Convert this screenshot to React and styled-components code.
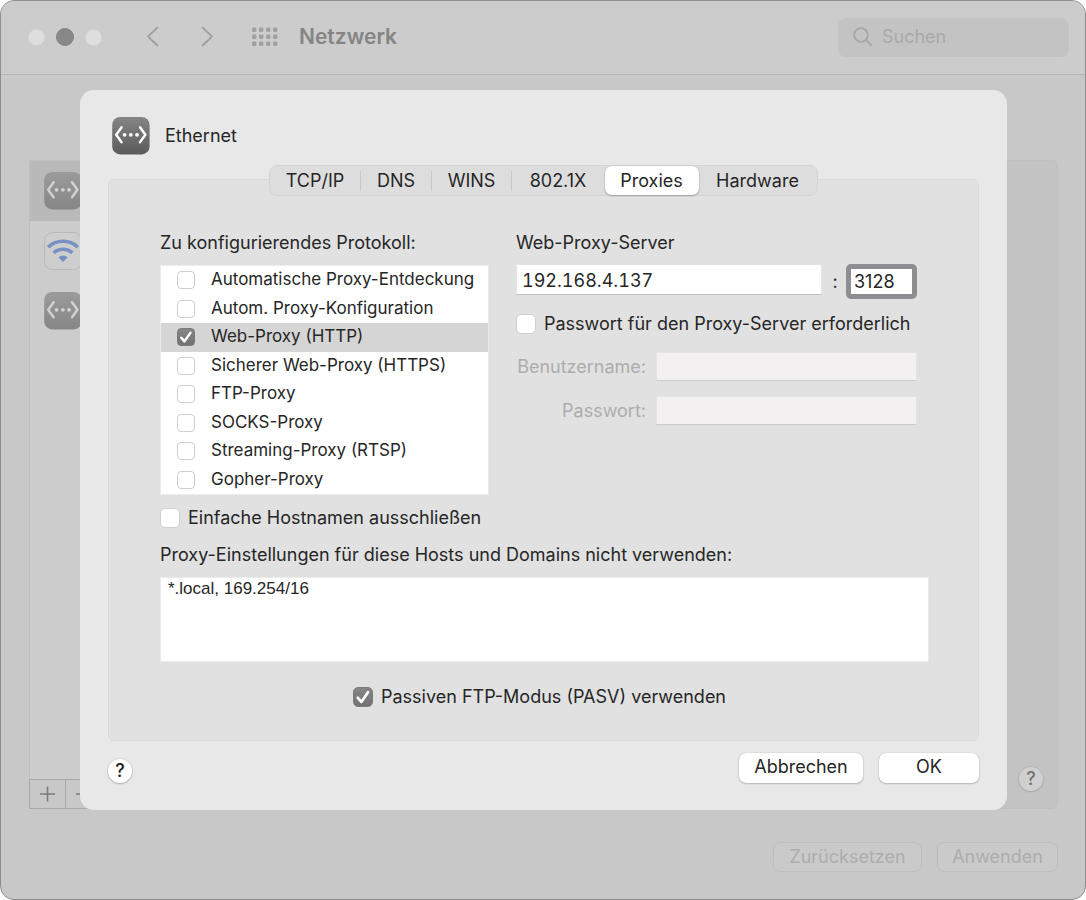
import React, { useState } from "react";
import styled, { createGlobalStyle } from "styled-components";

const GlobalStyle = createGlobalStyle`
  *, *::before, *::after { box-sizing: border-box; }
  body {
    margin: 0;
    background: #ffffff;
    font-family: Inter, "Liberation Sans", sans-serif;
    font-size: 18px;
    line-height: 22px;
    color: #262626;
  }
  button, input, textarea { font: inherit; color: inherit; margin: 0; }
`;

const Window = styled.main`
  display: flex;
  flex-direction: column;
  min-height: 100vh;
  overflow: hidden;
  border: 1px solid #8e8e8e;
  border-radius: 14px;
  background: #c8c8c8;
`;

const TitleBar = styled.header`
  display: flex;
  align-items: center;
  height: 74px;
  padding: 0 16px 1px 27px;
  background: #cccccc;
  border-bottom: 1px solid #b6b6b6;
`;

const TrafficLights = styled.div`
  display: flex;
  align-items: center;
  gap: 11px;
`;

const Light = styled.button`
  width: ${(p) => (p.$dark ? 18 : 17)}px;
  height: ${(p) => (p.$dark ? 18 : 17)}px;
  padding: 0;
  border: 1px solid ${(p) => (p.$dark ? "#838383" : "#d6d6d6")};
  border-radius: 50%;
  background: ${(p) => (p.$dark ? "#888888" : "#dedede")};
`;

const NavButtons = styled.nav`
  display: flex;
  gap: 40px;
  margin-left: 44px;
`;

const IconButton = styled.button`
  display: grid;
  place-items: center;
  padding: 0;
  border: 0;
  background: none;
  color: #a0a0a0;
`;

const GridButton = styled(IconButton)`
  margin-left: 38px;
`;

const WindowTitle = styled.h1`
  flex: 1;
  margin: 0 0 0 21px;
  font-size: 21px;
  line-height: 28px;
  font-weight: 600;
  color: #858585;
`;

const SearchBox = styled.label`
  display: flex;
  align-items: center;
  gap: 9px;
  width: 231px;
  height: 39px;
  padding: 0 14px;
  border-radius: 8px;
  background: #c3c3c3;
  color: #a6a6a6;
`;

const SearchInput = styled.input`
  flex: 1;
  min-width: 0;
  padding: 0;
  border: 0;
  outline: 0;
  background: none;
  &::placeholder { color: #a9a9a9; opacity: 1; }
`;

const Body = styled.div`
  flex: 1;
  display: grid;
  & > * { grid-area: 1 / 1; }
`;

const Backdrop = styled.div`
  display: flex;
  flex-direction: column;
  padding: 85px 27px 27px 28px;
`;

const Columns = styled.div`
  flex: 1;
  display: flex;
  gap: 24px;
`;

const Sidebar = styled.aside`
  display: flex;
  flex-direction: column;
  width: 270px;
`;

const Services = styled.ul`
  flex: 1;
  margin: 0;
  padding: 0;
  list-style: none;
  background: #cccccc;
  border: 1px solid #c0c0c0;
  border-bottom: 0;
`;

const Service = styled.li`
  display: flex;
  align-items: center;
  height: 60px;
  padding: 0 14px;
  background: ${(p) => (p.$selected ? "#b9b9b9" : "transparent")};
`;

const SidebarTools = styled.div`
  display: flex;
  height: 30px;
  border: 1px solid #a9a9a9;
`;

const ToolButton = styled(IconButton)`
  width: 36px;
  color: #7c7c7c;
  border-right: 1px solid #a9a9a9;
`;

const Details = styled.section`
  flex: 1;
  display: flex;
  align-items: flex-end;
  justify-content: flex-end;
  padding: 17px 14px;
  border: 1px solid #bfbfbf;
  border-radius: 6px;
  background: #c3c3c3;
`;

const BackdropActions = styled.div`
  display: flex;
  justify-content: flex-end;
  gap: 15px;
  margin-top: 33px;
`;

const GhostButton = styled.button`
  width: ${(p) => p.$width}px;
  height: 30px;
  padding: 0;
  border: 1px solid #bebebe;
  border-radius: 7px;
  background: #cacaca;
  color: #adadad;
`;

const HelpButton = styled.button`
  width: 24px;
  height: 24px;
  padding: 0;
  border: 0;
  border-radius: 50%;
  font-weight: 500;
  background: ${(p) => (p.$dimmed ? "#d0d0d0" : "#ffffff")};
  color: ${(p) => (p.$dimmed ? "#727272" : "#1c1c1c")};
  box-shadow: 0 0 0 1px rgba(0, 0, 0, 0.05), 0 1px 2px rgba(0, 0, 0, ${(p) => (p.$dimmed ? 0.1 : 0.2)});
`;

const Sheet = styled.section`
  z-index: 1;
  align-self: start;
  margin: 15px 78px 0 79px;
  padding: 27px 28px;
  border-radius: 14px;
  background: #e8e8e8;
`;

const SheetHeader = styled.header`
  display: flex;
  align-items: center;
  gap: 15px;
  margin: 0 4px 10px;
`;

const SheetTitle = styled.h2`
  margin: 0;
  font-size: 18px;
  font-weight: 400;
`;

const Tabs = styled.div`
  position: relative;
  display: grid;
  grid-template-columns: 91px 71px 80px 93px 94px 118px;
  width: fit-content;
  height: 31px;
  margin: 0 auto -17px;
  border: 1px solid #d4d4d4;
  border-radius: 8px;
  background: #dddddd;
`;

const Tab = styled.button`
  padding: 0;
  border: 0;
  border-radius: 7px;
  background: ${(p) => (p.$active ? "#ffffff" : "none")};
  box-shadow: ${(p) => (p.$active ? "0 0 1px rgba(0,0,0,.2), 0 1px 2px rgba(0,0,0,.25)" : "none")};
`;

const TabLabel = styled.span`
  display: block;
  line-height: 20px;
  border-right: 1px solid ${(p) => (p.$divided ? "#c8c8c8" : "transparent")};
`;

const Panel = styled.div`
  padding: 52px 49px 32px 51px;
  border: 1px solid #d9d9d9;
  border-radius: 6px;
  background: #e1e1e1;
`;

const Split = styled.div`
  display: flex;
  gap: 27px;
`;

const ProtocolColumn = styled.section`
  width: 329px;
`;

const ServerColumn = styled.section`
  flex: 1;
  max-width: 401px;
`;

const Caption = styled.h3`
  display: block;
  margin: 0 0 11px;
  font-size: 18px;
  line-height: 22px;
  font-weight: 400;
`;

const ProtocolList = styled.ul`
  display: grid;
  grid-auto-rows: 1fr;
  height: 230px;
  margin: 0;
  padding: 0;
  list-style: none;
  border: 1px solid #ebebeb;
  background: #ffffff;
  font-size: 17px;
`;

const ProtocolRow = styled.li`
  display: flex;
  align-items: center;
  padding-left: 16px;
  background: ${(p) => (p.$selected ? "#d5d5d5" : "transparent")};
`;

const CheckLabel = styled.label`
  display: flex;
  align-items: center;
  gap: ${(p) => (p.$small ? 16 : 8)}px;
  white-space: nowrap;
`;

const CheckText = styled.span`
  padding-bottom: ${(p) => (p.$small ? 2 : 0)}px;
`;

const CheckFrame = styled.span`
  display: grid;
  flex: none;
  & > * { grid-area: 1 / 1; }
  & > svg { pointer-events: none; place-self: center; }
`;

const CheckInput = styled.input`
  appearance: none;
  width: ${(p) => (p.$small ? 18 : 20)}px;
  height: ${(p) => (p.$small ? 18 : 20)}px;
  border: 1px solid #cfcfcf;
  border-radius: ${(p) => (p.$small ? 4 : 5)}px;
  background: #ffffff;
  &:checked {
    border-color: #7a7a7a;
    background: linear-gradient(#868686, #727272);
  }
`;

const AddressRow = styled.div`
  display: flex;
  align-items: center;
  height: 35px;
  margin-top: -1px;
`;

const TextField = styled.input`
  flex: 1;
  min-width: 0;
  height: 29px;
  padding: 0 5px;
  border: 1px solid #e4e4e4;
  border-bottom-color: #c0c0c0;
  outline: 0;
  background: #ffffff;
  &:disabled {
    background: #f2f0f1;
    border-color: #e4e3e3;
    border-bottom-color: #cbcbcb;
  }
`;

const AddressField = styled(TextField)`
  align-self: flex-start;
  height: 31px;
  padding-top: 2px;
  font-variant-numeric: tabular-nums;
`;

const Colon = styled.span`
  width: 24px;
  padding-left: 2px;
  text-align: center;
`;

const PortField = styled.input`
  width: 71px;
  height: 35px;
  padding: 0 3px;
  border: 5px solid #8d8d92;
  border-radius: 5px;
  outline: 0;
  background: #ffffff;
`;

const PasswordToggle = styled.div`
  margin: 14px 0 17px;
`;

const Credentials = styled.div`
  display: grid;
  grid-template-columns: 130px 1fr;
  align-items: center;
  gap: 15px 10px;
`;

const DisabledLabel = styled.label`
  text-align: right;
  color: #adadad;
`;

const SimpleHosts = styled.div`
  margin: 12px 0 15px;
`;

const BypassField = styled.textarea`
  display: block;
  width: 100%;
  height: 85px;
  padding: 0 7px;
  border: 1px solid #ebebeb;
  outline: 0;
  resize: none;
  background: #ffffff;
  font-family: "Liberation Sans", sans-serif;
  font-size: 17px;
  line-height: 22px;
`;

const PassiveRow = styled.div`
  display: flex;
  justify-content: center;
  margin-top: 24px;
  padding-right: 10px;
`;

const SheetFooter = styled.footer`
  display: flex;
  align-items: flex-end;
  gap: 16px;
  margin-top: 12px;
`;

const Spacer = styled.span`
  flex: 1;
`;

const PushButton = styled.button`
  width: ${(p) => p.$width}px;
  height: 30px;
  padding: 0 0 2px;
  border: 0;
  border-radius: 7px;
  background: #ffffff;
  box-shadow: 0 0 1px rgba(0, 0, 0, 0.3), 0 1px 2px rgba(0, 0, 0, 0.2);
`;

function EthernetIcon({ dimmed }) {
  const id = dimmed ? "tile-dimmed" : "tile";
  return (
    <svg width="38" height="38" viewBox="0 0 38 38" aria-hidden="true">
      <defs>
        <linearGradient id={id} x1="0" y1="0" x2="0" y2="1">
          <stop offset="0" stopColor={dimmed ? "#9b9b9b" : "#858585"} />
          <stop offset="1" stopColor={dimmed ? "#868686" : "#5a5a5a"} />
        </linearGradient>
      </defs>
      <rect x="0.2" y="0" width="37.4" height="37.4" rx="8" fill={`url(#${id})`} />
      <g stroke={dimmed ? "#d2d2d2" : "#ffffff"} strokeWidth="2.4" fill="none" strokeLinecap="round" strokeLinejoin="round">
        <path d="M9.6 10.3 L4.2 17.8 L9.6 25.3" />
        <path d="M28 10.3 L33.4 17.8 L28 25.3" />
      </g>
      <g fill={dimmed ? "#d2d2d2" : "#ffffff"}>
        <circle cx="12.6" cy="17.8" r="1.9" />
        <circle cx="18.8" cy="17.8" r="1.9" />
        <circle cx="25" cy="17.8" r="1.9" />
      </g>
    </svg>
  );
}

function WifiIcon() {
  return (
    <svg width="38" height="38" viewBox="0 0 38 38" aria-hidden="true">
      <rect x="0.5" y="0.5" width="37" height="37" rx="8" fill="#cecece" stroke="#b7b9bd" />
      <g fill="none" stroke="#7890c4" strokeWidth="3.6">
        <path d="M4.2 15.2 A21.5 21.5 0 0 1 33.8 15.2" />
        <path d="M9.7 20.9 A13.6 13.6 0 0 1 28.3 20.9" />
      </g>
      <path d="M14.4 25.4 A6.8 6.8 0 0 1 23.6 25.4 L19 30 Z" fill="#7890c4" />
    </svg>
  );
}

function Chevron({ right }) {
  return (
    <svg width="14" height="22" viewBox="0 0 14 22" aria-hidden="true">
      <path
        d={right ? "M2.5 1.5 L12 10.5 L2.5 19.5" : "M11.5 1.5 L2 10.5 L11.5 19.5"}
        fill="none"
        stroke="currentColor"
        strokeWidth="1.8"
        strokeLinecap="round"
        strokeLinejoin="round"
      />
    </svg>
  );
}

function DotGrid() {
  return (
    <svg width="26" height="20" viewBox="0 0 26 20" aria-hidden="true" fill="currentColor">
      {[0, 7, 14, 21].map((x) =>
        [0.5, 7.5, 14.5].map((y) => <rect key={`${x}-${y}`} x={x} y={y} width="4.4" height="4.4" rx="1.3" />)
      )}
    </svg>
  );
}

function SearchIcon() {
  return (
    <svg width="21" height="20" viewBox="0 0 21 20" aria-hidden="true" fill="none" stroke="currentColor" strokeWidth="1.8">
      <circle cx="9" cy="8" r="6.8" />
      <path d="M14 13 L19.2 18.2" strokeLinecap="round" />
    </svg>
  );
}

function Checkbox({ label, small, defaultChecked }) {
  const [checked, setChecked] = useState(Boolean(defaultChecked));
  const size = small ? 18 : 20;
  return (
    <CheckLabel $small={small}>
      <CheckFrame>
        <CheckInput type="checkbox" $small={small} checked={checked} onChange={(e) => setChecked(e.target.checked)} />
        {checked && (
          <svg width={size} height={size} viewBox="0 0 20 20" aria-hidden="true">
            <path d="M4.8 10.8 L8.3 14.9 L15 5.2" fill="none" stroke="#ffffff" strokeWidth="2.7" strokeLinecap="round" strokeLinejoin="round" />
          </svg>
        )}
      </CheckFrame>
      <CheckText $small={small}>{label}</CheckText>
    </CheckLabel>
  );
}

const TABS = ["TCP/IP", "DNS", "WINS", "802.1X", "Proxies", "Hardware"];

const PROTOCOLS = [
  "Automatische Proxy-Entdeckung",
  "Autom. Proxy-Konfiguration",
  "Web-Proxy (HTTP)",
  "Sicherer Web-Proxy (HTTPS)",
  "FTP-Proxy",
  "SOCKS-Proxy",
  "Streaming-Proxy (RTSP)",
  "Gopher-Proxy",
];

export default function App() {
  const [tab, setTab] = useState("Proxies");
  return (
    <>
      <GlobalStyle />
      <Window>
        <TitleBar>
          <TrafficLights>
            <Light aria-label="Schließen" />
            <Light $dark aria-label="Minimieren" />
            <Light aria-label="Zoomen" />
          </TrafficLights>
          <NavButtons>
            <IconButton aria-label="Zurück"><Chevron /></IconButton>
            <IconButton aria-label="Vorwärts"><Chevron right /></IconButton>
          </NavButtons>
          <GridButton aria-label="Alle einblenden"><DotGrid /></GridButton>
          <WindowTitle>Netzwerk</WindowTitle>
          <SearchBox>
            <SearchIcon />
            <SearchInput type="text" placeholder="Suchen" aria-label="Suchen" />
          </SearchBox>
        </TitleBar>

        <Body>
          <Backdrop>
            <Columns>
              <Sidebar>
                <Services>
                  <Service $selected><EthernetIcon dimmed /></Service>
                  <Service><WifiIcon /></Service>
                  <Service><EthernetIcon dimmed /></Service>
                </Services>
                <SidebarTools>
                  <ToolButton aria-label="Hinzufügen">
                    <svg width="16" height="16" viewBox="0 0 16 16" stroke="currentColor" strokeWidth="1.6">
                      <path d="M0 8 H15 M7.5 0.5 V15.5" />
                    </svg>
                  </ToolButton>
                  <ToolButton aria-label="Entfernen">
                    <svg width="16" height="16" viewBox="0 0 16 16" stroke="currentColor" strokeWidth="1.6">
                      <path d="M0 8 H15" />
                    </svg>
                  </ToolButton>
                </SidebarTools>
              </Sidebar>
              <Details>
                <HelpButton $dimmed>?</HelpButton>
              </Details>
            </Columns>
            <BackdropActions>
              <GhostButton $width={149} disabled>Zurücksetzen</GhostButton>
              <GhostButton $width={121} disabled>Anwenden</GhostButton>
            </BackdropActions>
          </Backdrop>

          <Sheet role="dialog" aria-labelledby="sheet-title">
            <SheetHeader>
              <EthernetIcon />
              <SheetTitle id="sheet-title">Ethernet</SheetTitle>
            </SheetHeader>

            <Tabs role="tablist">
              {TABS.map((name, i) => (
                <Tab key={name} role="tab" aria-selected={tab === name} $active={tab === name} onClick={() => setTab(name)}>
                  <TabLabel $divided={i < TABS.length - 1 && tab !== name && tab !== TABS[i + 1]}>{name}</TabLabel>
                </Tab>
              ))}
            </Tabs>

            <Panel>
              <Split>
                <ProtocolColumn>
                  <Caption>Zu konfigurierendes Protokoll:</Caption>
                  <ProtocolList>
                    {PROTOCOLS.map((name) => (
                      <ProtocolRow key={name} $selected={name === "Web-Proxy (HTTP)"}>
                        <Checkbox small label={name} defaultChecked={name === "Web-Proxy (HTTP)"} />
                      </ProtocolRow>
                    ))}
                  </ProtocolList>
                </ProtocolColumn>

                <ServerColumn>
                  <Caption>Web-Proxy-Server</Caption>
                  <AddressRow>
                    <AddressField type="text" defaultValue="192.168.4.137" aria-label="Web-Proxy-Server" />
                    <Colon>:</Colon>
                    <PortField type="text" defaultValue="3128" aria-label="Port" />
                  </AddressRow>
                  <PasswordToggle>
                    <Checkbox label="Passwort für den Proxy-Server erforderlich" />
                  </PasswordToggle>
                  <Credentials>
                    <DisabledLabel htmlFor="user">Benutzername:</DisabledLabel>
                    <TextField id="user" type="text" disabled />
                    <DisabledLabel htmlFor="password">Passwort:</DisabledLabel>
                    <TextField id="password" type="password" disabled />
                  </Credentials>
                </ServerColumn>
              </Split>

              <SimpleHosts>
                <Checkbox label="Einfache Hostnamen ausschließen" />
              </SimpleHosts>
              <Caption as="label" htmlFor="bypass">
                Proxy-Einstellungen für diese Hosts und Domains nicht verwenden:
              </Caption>
              <BypassField id="bypass" defaultValue="*.local, 169.254/16" />
              <PassiveRow>
                <Checkbox label="Passiven FTP-Modus (PASV) verwenden" defaultChecked />
              </PassiveRow>
            </Panel>

            <SheetFooter>
              <HelpButton>?</HelpButton>
              <Spacer />
              <PushButton $width={124}>Abbrechen</PushButton>
              <PushButton $width={100}>OK</PushButton>
            </SheetFooter>
          </Sheet>
        </Body>
      </Window>
    </>
  );
}
